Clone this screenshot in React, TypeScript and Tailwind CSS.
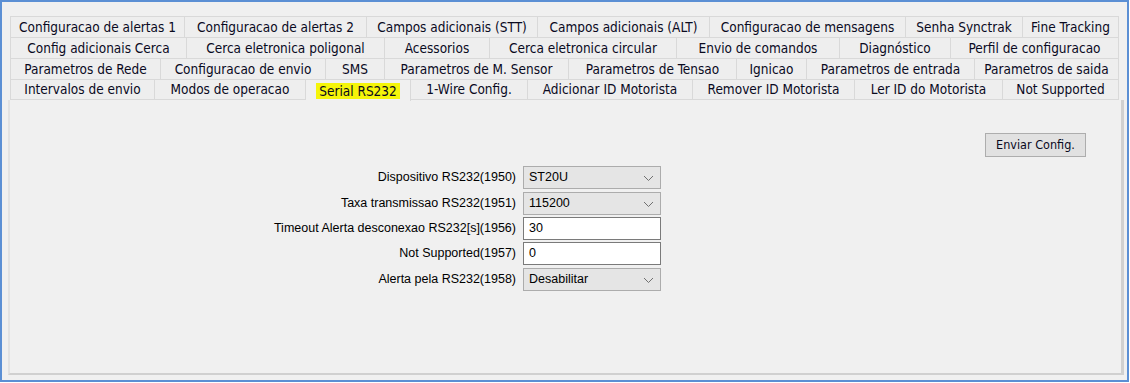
type Tab = { label: string; w: string; selected?: boolean }

const rows: Tab[][] = [
  [
    { label: "Configuracao de alertas 1", w: "w-[175px]" },
    { label: "Configuracao de alertas 2", w: "w-[182px]" },
    { label: "Campos adicionais (STT)", w: "w-[171px]" },
    { label: "Campos adicionais (ALT)", w: "w-[172px]" },
    { label: "Configuracao de mensagens", w: "w-[196px]" },
    { label: "Senha Synctrak", w: "w-[117px]" },
    { label: "Fine Tracking", w: "w-[96px]" },
  ],
  [
    { label: "Config adicionais Cerca", w: "w-[177px]" },
    { label: "Cerca eletronica poligonal", w: "w-[198px]" },
    { label: "Acessorios", w: "w-[105px]" },
    { label: "Cerca eletronica circular", w: "w-[187px]" },
    { label: "Envio de comandos", w: "w-[163px]" },
    { label: "Diagnóstico", w: "w-[111px]" },
    { label: "Perfil de configuracao", w: "w-[168px]" },
  ],
  [
    { label: "Parametros de Rede", w: "w-[151px]" },
    { label: "Configuracao de envio", w: "w-[165px]" },
    { label: "SMS", w: "w-[59px]" },
    { label: "Parametros de M. Sensor", w: "w-[184px]" },
    { label: "Parametros de Tensao", w: "w-[168px]" },
    { label: "Ignicao", w: "w-[70px]" },
    { label: "Parametros de entrada", w: "w-[168px]" },
    { label: "Parametros de saida", w: "w-[144px]" },
  ],
  [
    { label: "Intervalos de envio", w: "w-[145px]" },
    { label: "Modos de operacao", w: "w-[151px]" },
    { label: "Serial RS232", w: "w-[105px]", selected: true },
    { label: "1-Wire Config.", w: "w-[117px]" },
    { label: "Adicionar ID Motorista", w: "w-[165px]" },
    { label: "Remover ID Motorista", w: "w-[162px]" },
    { label: "Ler ID do Motorista", w: "w-[148px]" },
    { label: "Not Supported", w: "w-[116px]" },
  ],
]

function TabRow({ tabs, last }: { tabs: Tab[]; last?: boolean }) {
  return (
    <div className="flex h-[21px]">
      {tabs.map((t, i) => (
        <div
          key={t.label}
          className={
            "flex items-center justify-center border-t border-r border-[#d9d9d9] " +
            t.w +
            (i === 0 ? " border-l" : "") +
            (t.selected ? " bg-[#f0f0f0] h-[22px]" : " bg-[#eeeeee]") +
            (last && !t.selected ? " border-b" : "")
          }
        >
          <span className={t.selected ? "bg-[#f5f50a] px-[3px] leading-[16px]" : ""}>{t.label}</span>
        </div>
      ))}
    </div>
  )
}

function Chevron() {
  return (
    <svg width="11" height="7" viewBox="0 0 11 7" className="mt-[2px]">
      <polyline points="1,1 5.5,5.5 10,1" fill="none" stroke="#707070" strokeWidth="1" />
    </svg>
  )
}

function Combo({ value }: { value: string }) {
  return (
    <div className="flex h-[23px] w-[138px] items-center justify-between border border-[#acacac] bg-[#e5e5e5] pl-[5px] pr-[6px]">
      <span>{value}</span>
      <Chevron />
    </div>
  )
}

function Field({ value }: { value: string }) {
  return (
    <div className="flex h-[23px] w-[138px] items-center border border-[#7a7a7a] bg-white pl-[5px]">
      <span>{value}</span>
    </div>
  )
}

const form = [
  { label: "Dispositivo RS232(1950)", el: <Combo value="ST20U" />, mt: "mt-0" },
  { label: "Taxa transmissao RS232(1951)", el: <Combo value="115200" />, mt: "mt-[3px]" },
  { label: "Timeout Alerta desconexao RS232[s](1956)", el: <Field value="30" />, mt: "mt-[2px]" },
  { label: "Not Supported(1957)", el: <Field value="0" />, mt: "mt-[2px]" },
  { label: "Alerta pela RS232(1958)", el: <Combo value="Desabilitar" />, mt: "mt-[3px]" },
]

export default function App() {
  return (
    <div className="h-[383px] w-[1130px] bg-white">
      <div className="h-[382px] w-[1129px] border-2 border-[#5b8fd4] bg-[#f0f0f0] pt-[14px] pl-[6px] pr-[4px] pb-[5px] text-[13.5px] text-[#0a0a1e] font-['DejaVu_Sans_Condensed','DejaVu_Sans',sans-serif]">
        <div className="pl-[2px]">
          {rows.map((r, i) => (
            <TabRow key={i} tabs={r} last={i === rows.length - 1} />
          ))}
        </div>
        <div className="flex h-[275px] w-[1116px] flex-col border-l-2 border-r-[3px] border-b-2 border-l-[#e2e2e2] border-r-[#d0d0d0] border-b-[#d0d0d0] bg-[#f0f0f0]">
          <div className="flex justify-end pt-[33px] pr-[35px]">
            <button className="h-[24px] w-[101px] border border-[#adadad] bg-[#e1e1e1] text-[12.5px] font-['DejaVu_Sans_Condensed',sans-serif]">
              Enviar Config.
            </button>
          </div>
          <div className="mt-[9px] flex flex-col pl-[251px] text-[12.5px] text-black font-['Liberation_Sans',Arial,sans-serif]">
            {form.map((f) => (
              <div key={f.label} className={"flex items-center " + f.mt}>
                <div className="w-[262px] pr-[7px] text-right whitespace-nowrap">{f.label}</div>
                {f.el}
              </div>
            ))}
          </div>
        </div>
      </div>
    </div>
  )
}
